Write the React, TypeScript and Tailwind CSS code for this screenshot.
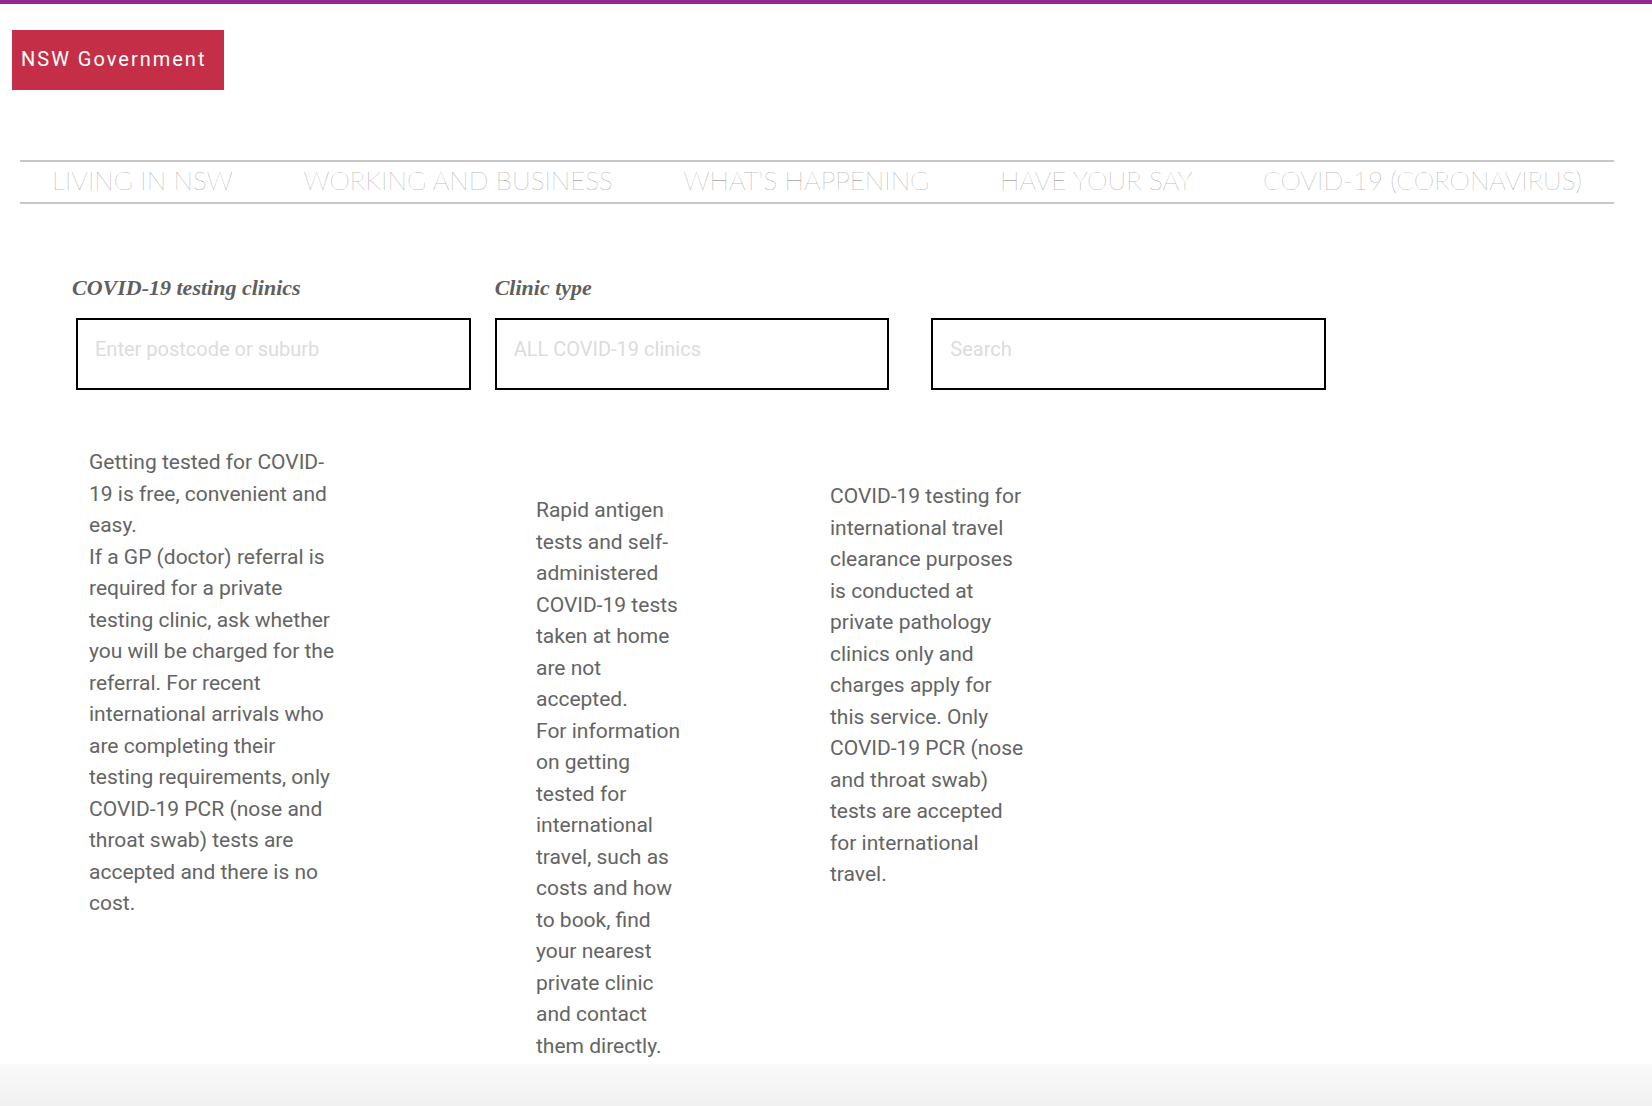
const navItems = [
  'LIVING IN NSW',
  'WORKING AND BUSINESS',
  "WHAT'S HAPPENING",
  'HAVE YOUR SAY',
  'COVID-19 (CORONAVIRUS)',
];

const testingInfo = `Getting tested for COVID-
19 is free, convenient and
easy.
If a GP (doctor) referral is
required for a private
testing clinic, ask whether
you will be charged for the
referral. For recent
international arrivals who
are completing their
testing requirements, only
COVID-19 PCR (nose and
throat swab) tests are
accepted and there is no
cost.`;

const rapidInfo = `Rapid antigen
tests and self-
administered
COVID-19 tests
taken at home
are not
accepted.
For information
on getting
tested for
international
travel, such as
costs and how
to book, find
your nearest
private clinic
and contact
them directly.`;

const travelInfo = `COVID-19 testing for
international travel
clearance purposes
is conducted at
private pathology
clinics only and
charges apply for
this service. Only
COVID-19 PCR (nose
and throat swab)
tests are accepted
for international
travel.`;

const fieldClass =
  'h-[72px] w-full border-2 border-black bg-white px-[17px] pb-[10px] text-xl text-black placeholder:text-[#dcdcdc] placeholder:opacity-100';

const labelClass =
  "block h-8 whitespace-nowrap font-['Liberation_Serif',serif] text-[22px] font-bold italic leading-8 text-[#5f5f5f]";

export default function App() {
  return (
    <div className="flex min-h-screen flex-col border-t-4 border-[#92278f] bg-white font-['Roboto',sans-serif]">
      <header>
        <div className="flex px-3 pt-[26px]">
          <a
            href="#home"
            className="inline-flex h-[60px] w-[212px] items-center whitespace-nowrap bg-[#c42f47] pb-0.5 pl-[9px] text-xl tracking-[2px] text-white"
          >
            NSW Government
          </a>
        </div>
        <nav aria-label="Main" className="ml-5 mr-[38px] mt-[70px] border-y-2 border-[#c8c8c8]">
          <ul className="flex h-10 items-start justify-between px-8">
            {navItems.map((item) => (
              <li key={item}>
                <a
                  href="#nav"
                  className="block whitespace-nowrap font-['Lato',sans-serif] text-[26px] font-thin leading-9 text-[#787878]"
                >
                  {item}
                </a>
              </li>
            ))}
          </ul>
        </nav>
      </header>

      <main className="flex-1">
        <form className="flex items-end pl-[76px] pr-[326px] pt-[68px]">
          <div className="mr-6 flex-1">
            <label htmlFor="place" className={labelClass + ' -ml-1'}>
              COVID-19 testing clinics
            </label>
            <input id="place" type="text" placeholder="Enter postcode or suburb" className={fieldClass + ' mt-[14px]'} />
          </div>
          <div className="mr-[42px] flex-1">
            <label htmlFor="type" className={labelClass}>
              Clinic type
            </label>
            <input id="type" type="text" placeholder="ALL COVID-19 clinics" className={fieldClass + ' mt-[14px]'} />
          </div>
          <div className="flex-1">
            <input aria-label="Search" type="text" placeholder="Search" className={fieldClass} />
          </div>
        </form>

        <div className="flex items-start pl-[89px] text-[21px] leading-normal text-[#646464]">
          <p className="mt-[57px] w-[447px] whitespace-pre-line">{testingInfo}</p>
          <p className="mt-[105px] w-[294px] whitespace-pre-line">{rapidInfo}</p>
          <p className="mt-[91px] whitespace-pre-line">{travelInfo}</p>
        </div>
      </main>

      <footer className="h-[42px] bg-linear-to-b from-[#fafafa] to-[#f1f1f1]" />
    </div>
  );
}
